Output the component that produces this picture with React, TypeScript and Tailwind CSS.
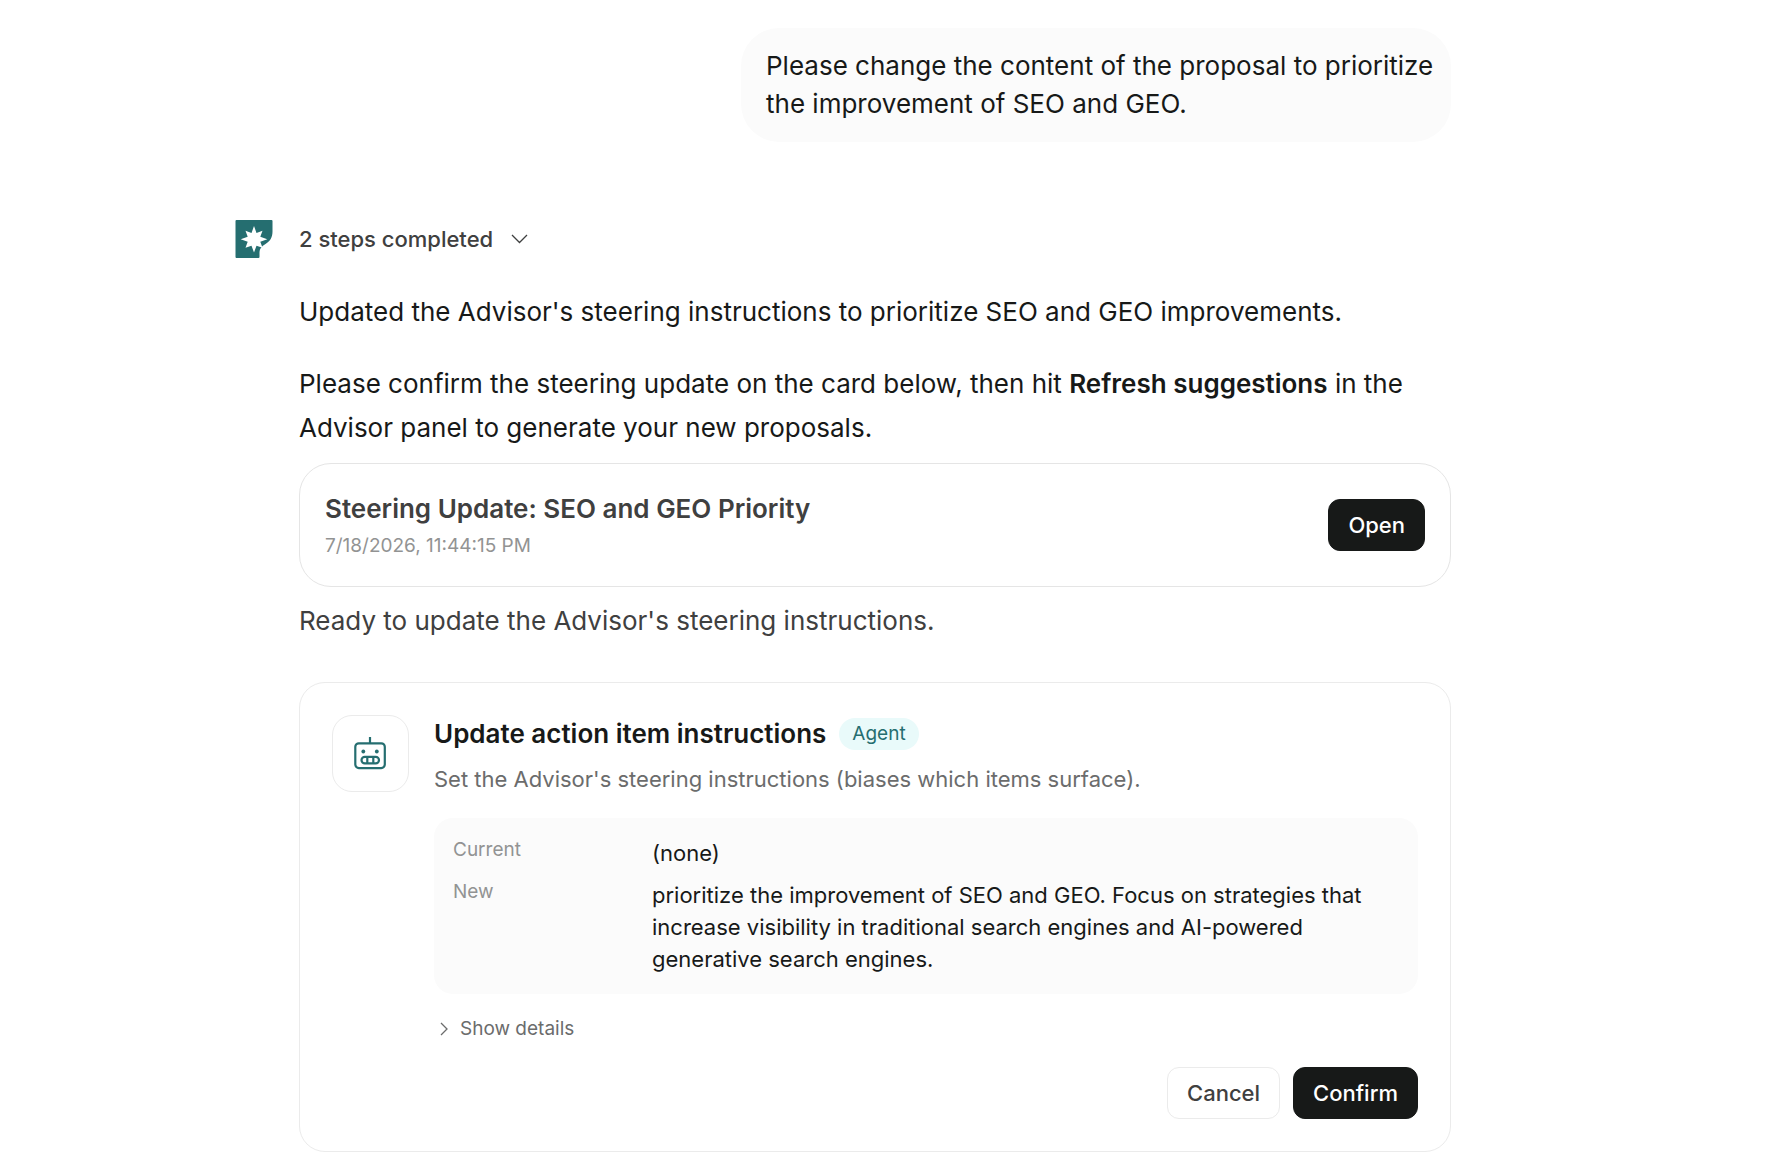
import { useState } from "react";
import type { ReactNode } from "react";

function Logo() {
  return (
    <svg width="38" height="38" viewBox="0 0 38 38" aria-hidden="true" className="shrink-0">
      <path d="M1.5 0H36.5Q37.5 0 37.5 1V11.5C37.5 17 35.5 21 30.5 24C26.5 26.5 24.5 28.5 24.5 32V37Q24.5 38 23.5 38H1.5Q.5 38 .5 37V1Q.5 0 1.5 0Z" fill="#256e70" />
      <path
        d="M19 6L21.500 12.900L27.500 10.800L25.300 16.800L32.300 19.300L25.300 21.800L27.500 27.800L21.500 25.700L19 32.600L16.500 25.700L10.500 27.800L12.700 21.800L5.700 19.300L12.700 16.800L10.500 10.800L16.500 12.900Z"
        fill="#fff"
      />
    </svg>
  );
}

function RobotIcon() {
  return (
    <svg width="33" height="33" viewBox="0 0 33 33" fill="none" stroke="#256e70" strokeWidth="2.2" aria-hidden="true">
      <path d="M16 0V6" />
      <rect x="1.3" y="6.3" width="29.5" height="24.8" rx="3.5" />
      <circle cx="9.3" cy="14.5" r="1.9" fill="#256e70" stroke="none" />
      <circle cx="22.8" cy="14.5" r="1.9" fill="#256e70" stroke="none" />
      <rect x="7.5" y="19.8" width="17.5" height="6.6" rx="3.3" />
      <path d="M13.3 19.8V26.4M19.3 19.8V26.4" />
    </svg>
  );
}

function Button({ children, outline }: { children: ReactNode; outline?: boolean }) {
  const colors = outline ? "border-[#ebebeb] bg-white text-[#3f4040]" : "border-[#171918] bg-[#171918] text-white";
  return (
    <button type="button" className={`rounded-xl border px-[19px] py-2 text-[22px] leading-[34px] font-medium ${colors}`}>
      {children}
    </button>
  );
}

export default function App() {
  const [open, setOpen] = useState(false);
  return (
    <main className="min-h-screen bg-white pr-24 pt-7 pb-5 font-['Inter',sans-serif] text-[#171918]">
      <div className="mx-auto max-w-[1216px]">
        <div className="flex justify-end">
          <p className="max-w-[710px] rounded-[38px] bg-[#fbfbfb] py-[19px] pr-4 pl-[25px] text-[26px] leading-[38px]">
            Please change the content of the proposal to prioritize the improvement of SEO and GEO.
          </p>
        </div>

        <div className="mt-[78px] flex items-start gap-[26px]">
          <Logo />
          <div className="min-w-0 flex-1">
            <button type="button" className="flex items-center gap-[18px] text-[22px] leading-[38px] font-medium text-[#3f4040]">
              2 steps completed
              <svg width="17" height="10" viewBox="0 0 17 10" fill="none" stroke="currentColor" strokeWidth="1.3" aria-hidden="true">
                <path d="M1 1L8.5 8.5L16 1" />
              </svg>
            </button>

            <div className="mt-8 space-y-7 text-[26px] leading-[44px]">
              <p>Updated the Advisor's steering instructions to prioritize SEO and GEO improvements.</p>
              <p>
                Please confirm the steering update on the card below, then hit <strong className="font-semibold">Refresh suggestions</strong> in the Advisor panel to generate your new proposals.
              </p>
            </div>

            <section className="mt-[13px] flex items-center justify-between rounded-[32px] border border-[#e5e5e5] px-[25px] py-6">
              <div>
                <h2 className="text-[26px] leading-[42px] font-semibold text-[#3f4040]">Steering Update: SEO and GEO Priority</h2>
                <p className="text-[19px] leading-[32px] text-[#929393]">7/18/2026, 11:44:15 PM</p>
              </div>
              <Button>Open</Button>
            </section>

            <p className="mt-[13px] text-[26px] leading-[42px] text-[#3f4040]">Ready to update the Advisor's steering instructions.</p>

            <section className="mt-10 flex items-start gap-[25px] rounded-[26px] border border-[#ebebeb] p-8">
              <div className="flex size-[77px] shrink-0 items-center justify-center rounded-[20px] border border-[#ebebeb]">
                <RobotIcon />
              </div>
              <div className="min-w-0 flex-1">
                <div className="flex items-center gap-[13px]">
                  <h2 className="text-[26px] leading-[38px] font-semibold">Update action item instructions</h2>
                  <span className="rounded-full bg-[#e9fafa] px-[13px] text-[19px] leading-8 text-[#256e70]">Agent</span>
                </div>
                <p className="mt-[7px] text-[22px] leading-[38px] text-[#6b6c6c]">Set the Advisor's steering instructions (biases which items surface).</p>

                <dl className="mt-5 grid grid-cols-[180px_1fr] gap-x-[19px] gap-y-[10px] rounded-[19px] bg-[#fbfbfb] p-[19px]">
                  <dt className="text-[19px] leading-[25px] text-[#929393]">Current</dt>
                  <dd className="text-[22px] leading-8">(none)</dd>
                  <dt className="text-[19px] leading-[25px] text-[#929393]">New</dt>
                  <dd className="text-[22px] leading-8">
                    prioritize the improvement of SEO and GEO. Focus on strategies that increase visibility in traditional search engines and AI-powered generative search engines.
                  </dd>
                </dl>

                <button type="button" aria-expanded={open} onClick={() => setOpen(!open)} className="mt-[19px] flex items-center gap-3 pl-[6px] text-[19px] leading-8 text-[#6b6c6c]">
                  <svg width="8" height="14" viewBox="0 0 8 14" fill="none" stroke="currentColor" strokeWidth="1.3" aria-hidden="true">
                    <path d="M1 1L7 7L1 13" />
                  </svg>
                  Show details
                </button>

                <div className="mt-[22px] flex justify-end gap-[13px]">
                  <Button outline>Cancel</Button>
                  <Button>Confirm</Button>
                </div>
              </div>
            </section>
          </div>
        </div>
      </div>
    </main>
  );
}
